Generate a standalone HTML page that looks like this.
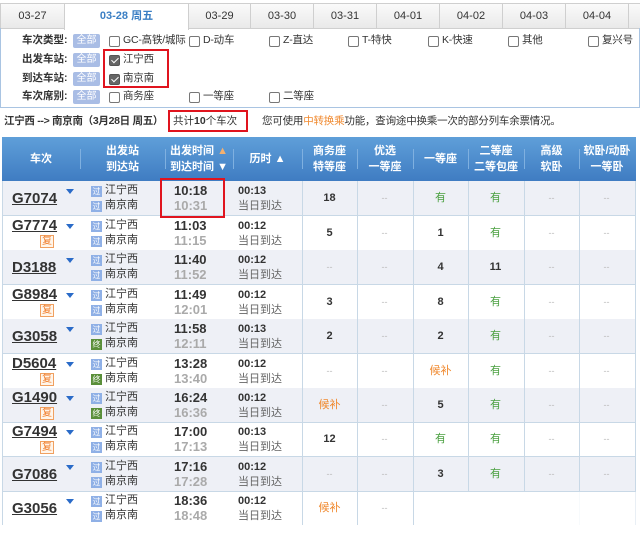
<!DOCTYPE html>
<html><head><meta charset="utf-8"><style>
*{margin:0;padding:0;box-sizing:border-box}
body{width:640px;height:535px;background:#fff;font-family:"Liberation Sans","Noto Sans CJK SC",sans-serif;color:#333;position:relative;overflow:hidden;font-size:11px;line-height:1.2}
.a{position:absolute}
.tab{position:absolute;top:3px;height:26px;border:1px solid #cfcfcf;background:linear-gradient(#fafafa,#e9e9e9);text-align:center;line-height:24px;font-size:11px;color:#333}
.tab.on{background:#fff;border-bottom:none;color:#3b7fc4;font-weight:bold;height:27px}
.lbl{position:absolute;left:22px;font-weight:bold;font-size:10.5px;color:#333}
.all{position:absolute;left:73px;width:27px;height:14px;background:#a9bde5;color:#fff;font-size:10px;text-align:center;line-height:14px;border-radius:2px}
.cb{position:absolute;width:11px;height:11px;border:1px solid #777;border-radius:2px;background:#fff}
.cb.k{background:#666;border-color:#555}
.cb.k:after{content:"";position:absolute;left:3px;top:0px;width:3px;height:6px;border:solid #fff;border-width:0 1.5px 1.5px 0;transform:rotate(45deg)}
.ct{position:absolute;font-size:10.5px;color:#333;letter-spacing:-0.2px}
.hd{position:absolute;top:137px;left:2px;width:634px;height:44px;background:linear-gradient(#5f9fd9,#3f7cc2);color:#fff;font-weight:bold;font-size:11px}
.hd div{position:absolute;text-align:center;line-height:16px}
.sep{position:absolute;top:12px;width:1px;height:20px;background:#2f64a0;border-right:1px solid #7fb0e0}
.row{position:absolute;left:2px;width:634px;height:35px;border-bottom:1px solid #c8d8e6}
.g{background:#eef0f6}
.vl{position:absolute;top:181px;width:1px;height:344px;background:#c8d8e6}
.tn{position:absolute;left:10px;font-weight:bold;font-size:15px;text-decoration:underline;color:#333}
.fu{position:absolute;left:38px;width:14px;height:13px;border:1px solid #f0a060;color:#f08030;font-size:10px;line-height:11px;text-align:center;background:#fff5ea}
.tri{position:absolute;left:64px;top:8px;width:0;height:0;border-left:4px solid transparent;border-right:4px solid transparent;border-top:5px solid #2a6bc8}
.ic{position:absolute;left:89px;width:11px;height:11px;background:#8fb0e6;color:#fff;font-size:8px;line-height:11px;text-align:center}
.ic.e{background:#5a8f3a}
.st{position:absolute;left:103px;font-size:11px;color:#333}
.t1{position:absolute;left:172px;top:2px;font-weight:bold;font-size:13px;color:#333}
.t2{position:absolute;left:172px;top:17px;font-weight:bold;font-size:13px;color:#aaa}
.d1{position:absolute;left:236px;top:4px;font-weight:bold;font-size:11px}
.d2{position:absolute;left:236px;top:19px;font-size:11px;color:#666}
.c{position:absolute;top:11px;width:55px;text-align:center;font-size:11px}
.n{font-weight:bold;color:#333}
.x{color:#bbb;font-size:9px;top:12px}
.y{color:#4aa040}
.h{color:#f08a30}
.red{position:absolute;border:2px solid #e0141e}
</style></head><body>
<div class="tab" style="left:0;width:65px">03-27</div>
<div class="tab on" style="left:64px;width:125px">03-28 周五</div>
<div class="tab" style="left:188px;width:63px">03-29</div>
<div class="tab" style="left:250px;width:64px">03-30</div>
<div class="tab" style="left:313px;width:64px">03-31</div>
<div class="tab" style="left:376px;width:64px">04-01</div>
<div class="tab" style="left:439px;width:64px">04-02</div>
<div class="tab" style="left:502px;width:64px">04-03</div>
<div class="tab" style="left:565px;width:64px">04-04</div>
<div class="tab" style="left:628px;width:20px"></div>
<div class="a" style="left:0;top:28px;width:640px;height:80px;border:1px solid #a9c4e2;border-top:none"></div>
<div class="lbl" style="top:34px">车次类型:</div><div class="all" style="top:34px">全部</div>
<div class="cb" style="left:109px;top:36px"></div><div class="ct" style="left:123px;top:34px">GC-高铁/城际</div>
<div class="cb" style="left:189px;top:36px"></div><div class="ct" style="left:203px;top:34px">D-动车</div>
<div class="cb" style="left:269px;top:36px"></div><div class="ct" style="left:283px;top:34px">Z-直达</div>
<div class="cb" style="left:348px;top:36px"></div><div class="ct" style="left:362px;top:34px">T-特快</div>
<div class="cb" style="left:428px;top:36px"></div><div class="ct" style="left:442px;top:34px">K-快速</div>
<div class="cb" style="left:508px;top:36px"></div><div class="ct" style="left:522px;top:34px">其他</div>
<div class="cb" style="left:588px;top:36px"></div><div class="ct" style="left:602px;top:34px">复兴号</div>
<div class="lbl" style="top:53px">出发车站:</div><div class="all" style="top:53px">全部</div>
<div class="cb k" style="left:109px;top:55px"></div><div class="ct" style="left:123px;top:53px">江宁西</div>
<div class="lbl" style="top:72px">到达车站:</div><div class="all" style="top:72px">全部</div>
<div class="cb k" style="left:109px;top:74px"></div><div class="ct" style="left:123px;top:72px">南京南</div>
<div class="lbl" style="top:90px">车次席别:</div><div class="all" style="top:90px">全部</div>
<div class="cb" style="left:109px;top:92px"></div><div class="ct" style="left:123px;top:90px">商务座</div>
<div class="cb" style="left:189px;top:92px"></div><div class="ct" style="left:203px;top:90px">一等座</div>
<div class="cb" style="left:269px;top:92px"></div><div class="ct" style="left:283px;top:90px">二等座</div>
<div class="red" style="left:103px;top:49px;width:66px;height:39px"></div>
<div class="a" style="left:4px;top:115px;font-size:10.5px;font-weight:bold;color:#333;letter-spacing:-0.3px">江宁西 --&gt; 南京南（3月28日 周五）</div>
<div class="a" style="left:173px;top:115px;font-size:10.5px">共计<b>10</b>个车次</div>
<div class="red" style="left:168px;top:110px;width:80px;height:22px"></div>
<div class="a" style="left:262px;top:115px;font-size:10.5px;letter-spacing:-0.2px">您可使用<span style="color:#f08a30">中转换乘</span>功能，查询途中换乘一次的部分列车余票情况。</div>
<div class="hd">
<div style="left:0;width:78px;top:14px">车次</div>
<div style="left:78px;width:85px;top:6px">出发站<br>到达站</div>
<div style="left:163px;width:68px;top:6px">出发时间 <span style="color:#f3b070">▲</span><br>到达时间 ▼</div>
<div style="left:231px;width:69px;top:14px">历时 ▲</div>
<div style="left:300px;width:55px;top:6px">商务座<br>特等座</div>
<div style="left:355px;width:56px;top:6px">优选<br>一等座</div>
<div style="left:411px;width:55px;top:14px">一等座</div>
<div style="left:466px;width:56px;top:6px">二等座<br>二等包座</div>
<div style="left:522px;width:55px;top:6px">高级<br>软卧</div>
<div style="left:577px;width:56px;top:6px">软卧/动卧<br>一等卧</div>
<span class="sep" style="left:78px"></span><span class="sep" style="left:163px"></span><span class="sep" style="left:231px"></span><span class="sep" style="left:300px"></span><span class="sep" style="left:355px"></span><span class="sep" style="left:411px"></span><span class="sep" style="left:466px"></span><span class="sep" style="left:522px"></span><span class="sep" style="left:577px"></span>
</div>

<div class="row g" style="top:181px"><div class="tn" style="top:9px">G7074</div><div class="tri"></div><div class="ic" style="top:5px">过</div><div class="st" style="top:3px">江宁西</div><div class="ic" style="top:20px">过</div><div class="st" style="top:18px">南京南</div><div class="t1">10:18</div><div class="t2">10:31</div><div class="d1">00:13</div><div class="d2">当日到达</div>
<div class="c n" style="left:300px">18</div><div class="c x" style="left:355px">--</div><div class="c y" style="left:411px">有</div><div class="c y" style="left:466px">有</div><div class="c x" style="left:522px">--</div><div class="c x" style="left:577px">--</div></div>

<div class="row" style="top:216px"><div class="tn" style="top:1px">G7774</div><div class="fu" style="top:19px">复</div><div class="tri"></div><div class="ic" style="top:5px">过</div><div class="st" style="top:3px">江宁西</div><div class="ic" style="top:20px">过</div><div class="st" style="top:18px">南京南</div><div class="t1">11:03</div><div class="t2">11:15</div><div class="d1">00:12</div><div class="d2">当日到达</div>
<div class="c n" style="left:300px">5</div><div class="c x" style="left:355px">--</div><div class="c n" style="left:411px">1</div><div class="c y" style="left:466px">有</div><div class="c x" style="left:522px">--</div><div class="c x" style="left:577px">--</div></div>

<div class="row g" style="top:250px"><div class="tn" style="top:9px">D3188</div><div class="tri"></div><div class="ic" style="top:5px">过</div><div class="st" style="top:3px">江宁西</div><div class="ic" style="top:20px">过</div><div class="st" style="top:18px">南京南</div><div class="t1">11:40</div><div class="t2">11:52</div><div class="d1">00:12</div><div class="d2">当日到达</div>
<div class="c x" style="left:300px">--</div><div class="c x" style="left:355px">--</div><div class="c n" style="left:411px">4</div><div class="c n" style="left:466px">11</div><div class="c x" style="left:522px">--</div><div class="c x" style="left:577px">--</div></div>

<div class="row" style="top:285px"><div class="tn" style="top:1px">G8984</div><div class="fu" style="top:19px">复</div><div class="tri"></div><div class="ic" style="top:5px">过</div><div class="st" style="top:3px">江宁西</div><div class="ic" style="top:20px">过</div><div class="st" style="top:18px">南京南</div><div class="t1">11:49</div><div class="t2">12:01</div><div class="d1">00:12</div><div class="d2">当日到达</div>
<div class="c n" style="left:300px">3</div><div class="c x" style="left:355px">--</div><div class="c n" style="left:411px">8</div><div class="c y" style="left:466px">有</div><div class="c x" style="left:522px">--</div><div class="c x" style="left:577px">--</div></div>

<div class="row g" style="top:319px"><div class="tn" style="top:9px">G3058</div><div class="tri"></div><div class="ic" style="top:5px">过</div><div class="st" style="top:3px">江宁西</div><div class="ic e" style="top:20px">终</div><div class="st" style="top:18px">南京南</div><div class="t1">11:58</div><div class="t2">12:11</div><div class="d1">00:13</div><div class="d2">当日到达</div>
<div class="c n" style="left:300px">2</div><div class="c x" style="left:355px">--</div><div class="c n" style="left:411px">2</div><div class="c y" style="left:466px">有</div><div class="c x" style="left:522px">--</div><div class="c x" style="left:577px">--</div></div>

<div class="row" style="top:354px"><div class="tn" style="top:1px">D5604</div><div class="fu" style="top:19px">复</div><div class="tri"></div><div class="ic" style="top:5px">过</div><div class="st" style="top:3px">江宁西</div><div class="ic e" style="top:20px">终</div><div class="st" style="top:18px">南京南</div><div class="t1">13:28</div><div class="t2">13:40</div><div class="d1">00:12</div><div class="d2">当日到达</div>
<div class="c x" style="left:300px">--</div><div class="c x" style="left:355px">--</div><div class="c h" style="left:411px">候补</div><div class="c y" style="left:466px">有</div><div class="c x" style="left:522px">--</div><div class="c x" style="left:577px">--</div></div>

<div class="row g" style="top:388px"><div class="tn" style="top:1px">G1490</div><div class="fu" style="top:19px">复</div><div class="tri"></div><div class="ic" style="top:5px">过</div><div class="st" style="top:3px">江宁西</div><div class="ic e" style="top:20px">终</div><div class="st" style="top:18px">南京南</div><div class="t1">16:24</div><div class="t2">16:36</div><div class="d1">00:12</div><div class="d2">当日到达</div>
<div class="c h" style="left:300px">候补</div><div class="c x" style="left:355px">--</div><div class="c n" style="left:411px">5</div><div class="c y" style="left:466px">有</div><div class="c x" style="left:522px">--</div><div class="c x" style="left:577px">--</div></div>

<div class="row" style="top:422px"><div class="tn" style="top:1px">G7494</div><div class="fu" style="top:19px">复</div><div class="tri"></div><div class="ic" style="top:5px">过</div><div class="st" style="top:3px">江宁西</div><div class="ic" style="top:20px">过</div><div class="st" style="top:18px">南京南</div><div class="t1">17:00</div><div class="t2">17:13</div><div class="d1">00:13</div><div class="d2">当日到达</div>
<div class="c n" style="left:300px">12</div><div class="c x" style="left:355px">--</div><div class="c y" style="left:411px">有</div><div class="c y" style="left:466px">有</div><div class="c x" style="left:522px">--</div><div class="c x" style="left:577px">--</div></div>

<div class="row g" style="top:457px"><div class="tn" style="top:9px">G7086</div><div class="tri"></div><div class="ic" style="top:5px">过</div><div class="st" style="top:3px">江宁西</div><div class="ic" style="top:20px">过</div><div class="st" style="top:18px">南京南</div><div class="t1">17:16</div><div class="t2">17:28</div><div class="d1">00:12</div><div class="d2">当日到达</div>
<div class="c x" style="left:300px">--</div><div class="c x" style="left:355px">--</div><div class="c n" style="left:411px">3</div><div class="c y" style="left:466px">有</div><div class="c x" style="left:522px">--</div><div class="c x" style="left:577px">--</div></div>

<div class="row" style="top:491px;border-bottom:none"><div class="tn" style="top:9px">G3056</div><div class="tri"></div><div class="ic" style="top:5px">过</div><div class="st" style="top:3px">江宁西</div><div class="ic" style="top:20px">过</div><div class="st" style="top:18px">南京南</div><div class="t1">18:36</div><div class="t2">18:48</div><div class="d1">00:12</div><div class="d2">当日到达</div>
<div class="c h" style="left:300px">候补</div><div class="c x" style="left:355px">--</div></div>

<div class="vl" style="left:2px"></div><div class="vl" style="left:302px"></div><div class="vl" style="left:357px"></div><div class="vl" style="left:413px"></div><div class="vl" style="left:468px"></div><div class="vl" style="left:524px"></div><div class="vl" style="left:579px"></div><div class="vl" style="left:635px"></div>
<div class="a" style="left:420px;top:492px;width:216px;height:33px;background:linear-gradient(90deg,#fff 60%,rgba(255,255,255,0.6))"></div>
<div class="red" style="left:160px;top:178px;width:65px;height:40px"></div>
</body></html>
